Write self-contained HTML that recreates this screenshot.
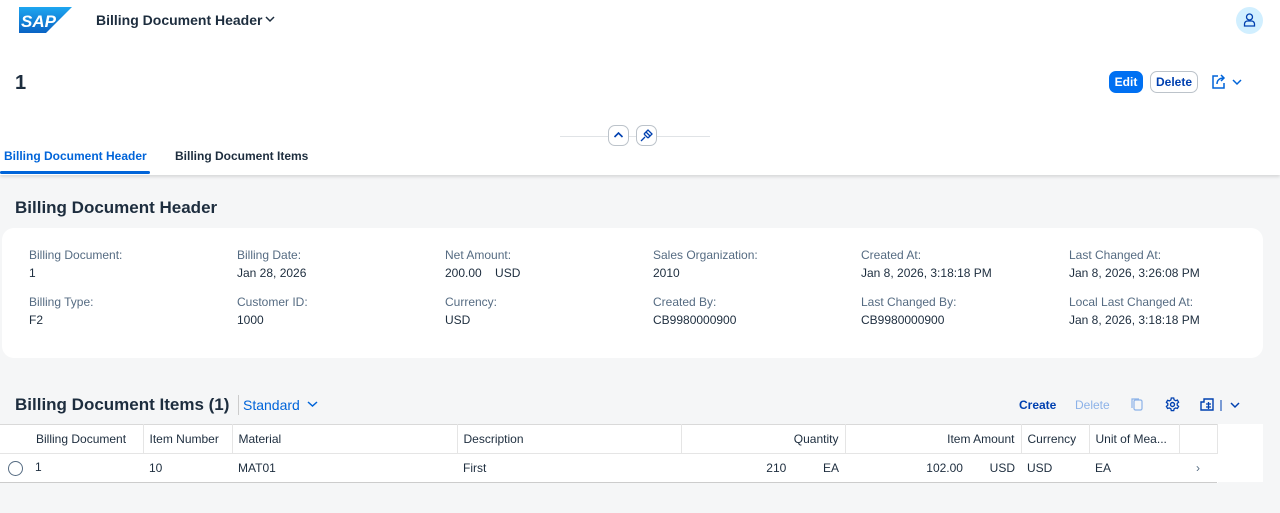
<!DOCTYPE html>
<html><head><style>
*{box-sizing:border-box;margin:0;padding:0}
body{width:1280px;height:513px;overflow:hidden;background:#f5f6f7;font-family:"Liberation Sans",Arial,sans-serif;color:#1d2d3e;font-size:12px;position:relative}
.abs{position:absolute}
.top{position:absolute;left:0;top:0;width:1280px;height:175px;background:#fff;box-shadow:0 2px 3px rgba(0,0,0,.12)}
.lbl{color:#556b82;font-size:12px}
.val{color:#1d2d3e;font-size:12px}
.btn{position:absolute;height:22px;border-radius:7px;font-size:12px;font-weight:bold;line-height:20px;text-align:center}
table{border-collapse:collapse;position:absolute;left:0;top:424px;background:#fff;table-layout:fixed}
td,th{height:29px;font-size:12px;white-space:nowrap;padding:0 6px;text-align:left}
th{font-weight:normal;color:#1d2d3e;border-right:1px solid #e5e5e5;border-bottom:1px solid #e5e5e5;border-top:1px solid #d9d9d9}
td{border-bottom:1px solid #ccc}
.r{text-align:right}
</style></head><body>
<div class="top"></div>
<svg class="abs" style="left:19px;top:7px" width="53" height="26" viewBox="0 0 53 26"><defs><linearGradient id="g" x1="0" y1="0" x2="0" y2="1"><stop offset="0" stop-color="#1ea6f0"/><stop offset="1" stop-color="#0a63c4"/></linearGradient></defs><path d="M0 0H53L27 26H0Z" fill="url(#g)"/><text x="2" y="20" font-family="Liberation Sans" font-weight="bold" font-size="17" fill="#fff" font-style="italic">SAP</text></svg>
<div class="abs" style="left:96px;top:12px;font-size:14px;font-weight:bold">Billing Document Header</div>
<svg class="abs" style="left:265px;top:15px" width="10" height="8"><path d="M1 2l4 4 4-4" stroke="#1d2d3e" stroke-width="1.5" fill="none"/></svg>
<div class="abs" style="left:1236px;top:7px;width:27px;height:27px;border-radius:50%;background:#d1efff"></div>
<svg class="abs" style="left:1243px;top:13px" width="13" height="14" viewBox="0 0 13 14"><circle cx="6.5" cy="4" r="3" stroke="#0040b0" stroke-width="1.3" fill="none"/><path d="M1.5 13V11a3 3 0 0 1 3-3h4a3 3 0 0 1 3 3v2z" stroke="#0040b0" stroke-width="1.3" fill="none"/></svg>
<div class="abs" style="left:15px;top:72px;font-size:20px;font-weight:bold">1</div>
<div class="btn" style="left:1109px;top:71px;width:34px;background:#0070f2;color:#fff;border:1px solid #0070f2">Edit</div>
<div class="btn" style="left:1150px;top:71px;width:48px;background:#fff;color:#0040b0;border:1px solid #bcc3ca">Delete</div>
<svg class="abs" style="left:1211px;top:74px" width="34" height="16"><path d="M7 2H2v12h11V9" stroke="#0064d9" stroke-width="1.5" fill="none"/><path d="M6 10c0-4 3-6 7-6M10 1l3 3-3 3" stroke="#0064d9" stroke-width="1.5" fill="none"/><path d="M22 6l4 4 4-4" stroke="#0064d9" stroke-width="1.5" fill="none"/></svg>
<div class="abs" style="left:560px;top:136px;width:150px;height:1px;background:#e0e3e6"></div>
<div class="abs" style="left:608px;top:125px;width:21px;height:21px;border:1px solid #bcc3ca;border-radius:7px;background:#fff"></div>
<svg class="abs" style="left:613px;top:130px" width="11" height="10"><path d="M1.5 7l4-4 4 4" stroke="#0040b0" stroke-width="1.6" fill="none"/></svg>
<div class="abs" style="left:636px;top:125px;width:21px;height:21px;border:1px solid #bcc3ca;border-radius:7px;background:#fff"></div>
<svg class="abs" style="left:640px;top:129px" width="13" height="13" viewBox="0 0 13 13"><path d="M1 12l4-4M4 5l4 4M6 3l4 4M6 3l2-2 4 4-2 2M4 5l2-2M8 9l2-2" stroke="#0040b0" stroke-width="1.3" fill="none"/></svg>
<div class="abs" style="left:4px;top:149px;font-size:12px;font-weight:bold;color:#0064d9">Billing Document Header</div>
<div class="abs" style="left:0;top:171px;width:150px;height:3px;background:#0064d9;border-radius:2px"></div>
<div class="abs" style="left:175px;top:149px;font-size:12px;font-weight:bold">Billing Document Items</div>
<div class="abs" style="left:15px;top:198px;font-size:17px;font-weight:bold">Billing Document Header</div>
<div class="abs" style="left:2px;top:228px;width:1261px;height:130px;background:#fff;border-radius:12px"></div>
<div class="abs" style="left:29px;top:246px;line-height:18px"><div class="lbl">Billing Document:</div><div class="val">1</div><div class="lbl" style="margin-top:11px">Billing Type:</div><div class="val">F2</div></div>
<div class="abs" style="left:237px;top:246px;line-height:18px"><div class="lbl">Billing Date:</div><div class="val">Jan 28, 2026</div><div class="lbl" style="margin-top:11px">Customer ID:</div><div class="val">1000</div></div>
<div class="abs" style="left:445px;top:246px;line-height:18px"><div class="lbl">Net Amount:</div><div class="val">200.00&nbsp;&nbsp;&nbsp; USD</div><div class="lbl" style="margin-top:11px">Currency:</div><div class="val">USD</div></div>
<div class="abs" style="left:653px;top:246px;line-height:18px"><div class="lbl">Sales Organization:</div><div class="val">2010</div><div class="lbl" style="margin-top:11px">Created By:</div><div class="val">CB9980000900</div></div>
<div class="abs" style="left:861px;top:246px;line-height:18px"><div class="lbl">Created At:</div><div class="val">Jan 8, 2026, 3:18:18 PM</div><div class="lbl" style="margin-top:11px">Last Changed By:</div><div class="val">CB9980000900</div></div>
<div class="abs" style="left:1069px;top:246px;line-height:18px"><div class="lbl">Last Changed At:</div><div class="val">Jan 8, 2026, 3:26:08 PM</div><div class="lbl" style="margin-top:11px">Local Last Changed At:</div><div class="val">Jan 8, 2026, 3:18:18 PM</div></div>
<div class="abs" style="left:15px;top:395px;font-size:17px;font-weight:bold">Billing Document Items (1)</div>
<div class="abs" style="left:238px;top:395px;width:1px;height:20px;background:#ccc"></div>
<div class="abs" style="left:243px;top:397px;font-size:14px;color:#0064d9">Standard</div>
<svg class="abs" style="left:307px;top:400px" width="11" height="8"><path d="M1 2l4.5 4 4.5-4" stroke="#0064d9" stroke-width="1.5" fill="none"/></svg>
<div class="abs" style="left:1019px;top:398px;font-size:12px;font-weight:bold;color:#0040b0">Create</div>
<div class="abs" style="left:1075px;top:398px;font-size:12px;color:#8cb2e8">Delete</div>
<svg class="abs" style="left:1130px;top:397px" width="14" height="15"><rect x="4" y="3" width="8" height="10" rx="1.5" stroke="#8cb2e8" fill="none" stroke-width="1.2"/><path d="M2 11V2h7" stroke="#8cb2e8" fill="none" stroke-width="1.2"/></svg>
<svg class="abs" style="left:1165px;top:397px" width="15" height="15" viewBox="0 0 15 15"><circle cx="7.5" cy="7.5" r="2" stroke="#0040b0" stroke-width="1.4" fill="none"/><path d="M6.3 1h2.4l.4 1.8 1.6.9 1.7-.6 1.2 2.1-1.4 1.2v1.8l1.4 1.2-1.2 2.1-1.7-.6-1.6.9-.4 1.8H6.3l-.4-1.8-1.6-.9-1.7.6-1.2-2.1 1.4-1.2V6.6L1.4 5.4l1.2-2.1 1.7.6 1.6-.9z" stroke="#0040b0" stroke-width="1.3" fill="none"/></svg>
<svg class="abs" style="left:1200px;top:397px" width="44" height="16"><path d="M4 2h9v11H1V5h3z" stroke="#0040b0" stroke-width="1.4" fill="none"/><path d="M6 7h5M6 10h5M8.5 5v7" stroke="#0040b0" stroke-width="1.3"/><path d="M21 3v11" stroke="#0040b0"/><path d="M31 6l4 4 4-4" stroke="#0040b0" stroke-width="1.5" fill="none"/></svg>
<div class="abs" style="left:1217px;top:424px;width:46px;height:58px;background:#fff;border-left:1px solid #999"></div>
<table style="width:1217px">
<colgroup><col style="width:143px"><col style="width:89px"><col style="width:225px"><col style="width:224px"><col style="width:164px"><col style="width:176px"><col style="width:68px"><col style="width:90px"><col style="width:38px"></colgroup>
<tr><th style="padding-left:36px">Billing Document</th><th>Item Number</th><th>Material</th><th>Description</th><th class="r">Quantity</th><th class="r">Item Amount</th><th>Currency</th><th>Unit of Mea...</th><th></th></tr>
<tr><td style="padding-left:8px"><span style="display:inline-block;width:15px;height:15px;border:1px solid #556b82;border-radius:50%;vertical-align:middle;margin-right:12px"></span>1</td><td>10</td><td>MAT01</td><td>First</td><td class="r">210&nbsp;&nbsp;&nbsp;&nbsp;&nbsp;&nbsp;&nbsp;&nbsp;&nbsp;&nbsp;&nbsp;EA</td><td class="r">102.00&nbsp;&nbsp;&nbsp;&nbsp;&nbsp;&nbsp;&nbsp;&nbsp;USD</td><td>USD</td><td>EA</td><td style="color:#556b82;text-align:center">&#8250;</td></tr>
</table>
</body></html>
